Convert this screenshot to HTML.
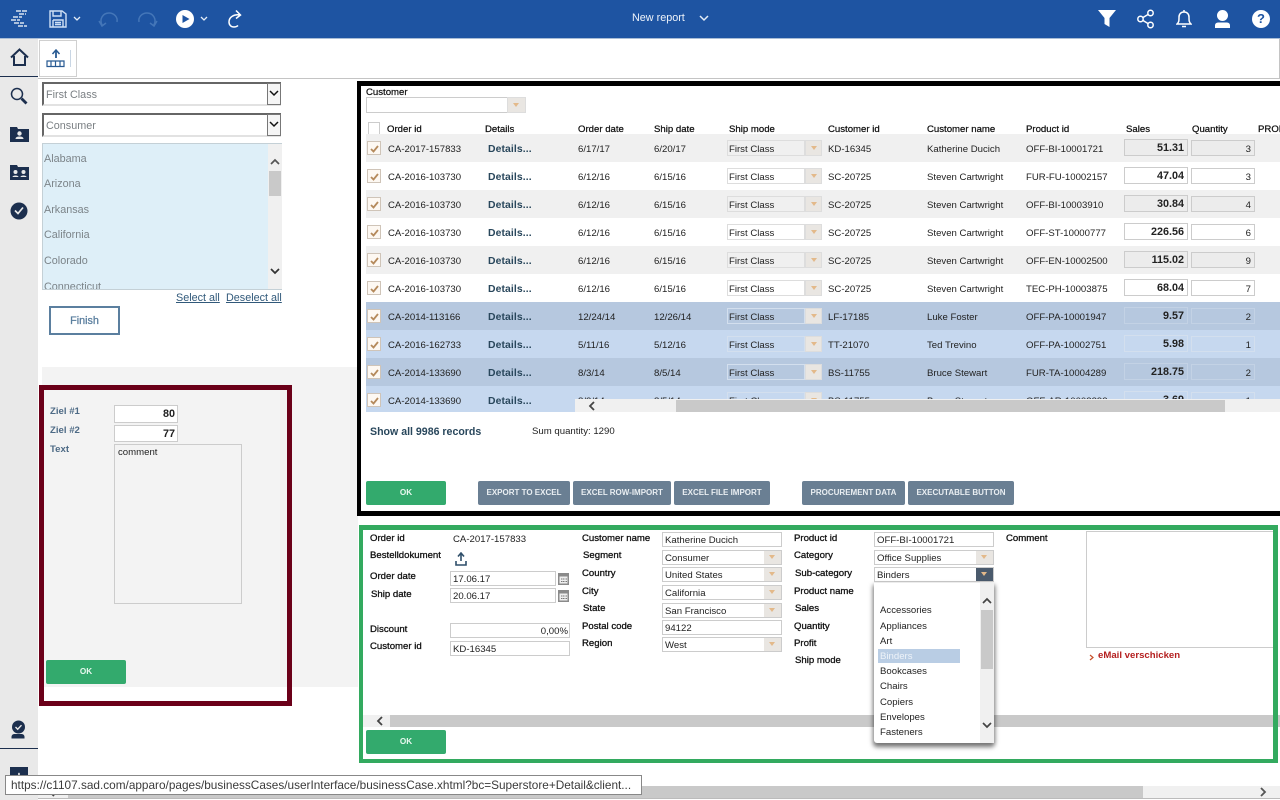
<!DOCTYPE html>
<html><head><meta charset="utf-8"><title>New report</title>
<style>
html,body{margin:0;padding:0;width:1280px;height:800px;overflow:hidden;background:#fff;font-family:"Liberation Sans",sans-serif;font-size:9.6px;color:#222}
div,span,a,svg{position:absolute;box-sizing:border-box;white-space:nowrap}
.h{font-weight:normal;color:#111;-webkit-text-stroke:.25px #111;top:125px;line-height:10px}
.r{left:366px;width:914px;height:28px;background:#fff}
.g{background:#f0f0f0}.d{background:#b6c8df}.l{background:#c6d8ef}
.r div,.r span{line-height:12px}
.t{top:9.5px}
.cb{left:1px;top:7px;width:14px;height:14px;background:#fdf8f2;border:1px solid #cfc4b8}
.cb svg{left:1px;top:1px}
.dt{left:122px;top:10px;font-weight:bold;font-size:10.4px;color:#29475c;letter-spacing:.1px}
.sm{left:361px;top:6px;width:78px;height:16px;background:#fff;border:1px solid #ddd;padding-left:1px;line-height:17px!important}
.g .sm{background:#f0f0f0}.d .sm{background:#b6c8df;border-color:#d3dfee}.l .sm{background:#c6d8ef;border-color:#d3dfee}
.ar{left:439px;top:6px;width:17px;height:16px;background:#e9e6e2;border:1px solid #ddd}
.ar:after,.a2:after{content:"";position:absolute;left:5px;top:5px;border-left:3px solid transparent;border-right:3px solid transparent;border-top:4px solid #e3b98a}
.s{left:758px;top:5px;width:64px;height:17px;background:#fff;border:1px solid #ccc;text-align:right;font-weight:bold;font-size:10.8px;padding-right:3px;line-height:17px!important}
.q{left:825px;top:6px;width:64px;height:16px;background:#fff;border:1px solid #ccc;text-align:right;padding-right:3px;line-height:17px!important}
.g .s,.g .q{background:#ececec}.d .s,.d .q{background:#b6c8df;border-color:#c3d2e5}.l .s,.l .q{background:#c6d8ef;border-color:#d3dfee}
.b{height:24px;background:#6a7f93;color:#e9eef2;font-weight:bold;font-size:8px;text-align:center;line-height:24px;border-radius:2px;top:481px}
.ok{width:80px;height:24px;background:#33aa6d;color:#e8f8ef;font-weight:bold;font-size:8.2px;text-align:center;line-height:24px;border-radius:2px}
.lb{font-weight:normal;color:#111;-webkit-text-stroke:.3px #111;line-height:11px}
.in{height:15px;background:#fff;border:1px solid #ccc;line-height:15px;padding-left:2px;font-size:9.6px}
.a2{width:17px;top:0;right:0;height:13px;background:#e9e6e2}
.a2:after{top:4px}
.li{left:880px;line-height:11px;font-size:9.6px;margin-top:1px}
.st{left:44px;color:#7c8489;font-size:10.8px;line-height:12px}
</style></head><body>

<!-- top bar -->
<div style="left:0;top:0;width:1280px;height:38px;background:#1e54a2"></div>
<div style="left:0;top:38px;width:1280px;height:1px;background:#a9bdd6"></div>
<svg style="left:9px;top:9px" width="22" height="20" fill="none" stroke="#fff" stroke-width="1.3"><path d="M7 2h12M10 5h7M4 8h9M2 11h9M5 14h10M9 17h9" stroke-dasharray="5 1"/></svg>
<svg style="left:48px;top:10px" width="20" height="18" fill="none" stroke="#cfe0f5" stroke-width="1.4"><path d="M2 1h12l4 3v13H2zM5 1v5h8V1M5 10h10v7M5 10v7M7 12.5h6M7 14.5h6"/></svg>
<svg style="left:72px;top:15px" width="10" height="8" fill="none" stroke="#e4edf8" stroke-width="1.3"><path d="M2 2l3 3 3-3"/></svg>
<svg style="left:98px;top:11px" width="22" height="17" fill="none" stroke="#4476b8" stroke-width="1.5"><path d="M4 14C1 8 5 2 11 2c5 0 9 4 8 9M1 10l3 5 4-3"/></svg>
<svg style="left:136px;top:11px" width="22" height="17" fill="none" stroke="#4476b8" stroke-width="1.5"><path d="M18 14c3-6-1-12-7-12C6 2 2 6 3 11M21 10l-3 5-4-3"/></svg>
<svg style="left:176px;top:10px" width="18" height="18"><circle cx="9" cy="9" r="9" fill="#fff"/><path d="M6.5 5l7 4-7 4z" fill="#1e54a2"/></svg>
<svg style="left:199px;top:15px" width="10" height="8" fill="none" stroke="#e4edf8" stroke-width="1.3"><path d="M2 2l3 3 3-3"/></svg>
<svg style="left:227px;top:9px" width="18" height="20" fill="none" stroke="#fff" stroke-width="1.5"><path d="M13 6c-6-1-11 2-11 7 0 3 2 5 5 5 2 0 3-.5 4-1.5M9 1.500l4.500 4.500-4.500 3.500"/></svg>
<div style="left:632px;top:12px;color:#eef3fa;font-size:10.8px;line-height:13px">New report</div>
<svg style="left:698px;top:14px" width="12" height="9" fill="none" stroke="#e4edf8" stroke-width="1.5"><path d="M2 2l4 4 4-4"/></svg>
<svg style="left:1097px;top:10px" width="20" height="18" fill="#fff"><path d="M1 0h18l-6.500 8v9l-5-3V8z"/></svg>
<svg style="left:1136px;top:9px" width="20" height="20" fill="none" stroke="#fff" stroke-width="1.5"><circle cx="4.500" cy="10" r="2.700"/><circle cx="14.500" cy="4" r="2.700"/><circle cx="14.500" cy="16" r="2.700"/><path d="M7 8.500l5-3M7 11.500l5 3"/></svg>
<svg style="left:1176px;top:9px" width="16" height="20" fill="none" stroke="#fff" stroke-width="1.5"><path d="M1 15c2-2 2-3 2-7 0-3 2-5 5-5s5 2 5 5c0 4 0 5 2 7zM6 17.500h4M8 1v2"/></svg>
<svg style="left:1214px;top:10px" width="17" height="18" fill="#fff"><circle cx="8.500" cy="5.500" r="5.500"/><path d="M1 18v-2.500c0-2 1.500-3 3.500-3h8c2 0 3.500 1 3.500 3V18z"/></svg>
<div style="left:1252px;top:10px;width:18px;height:18px;border-radius:50%;background:#fff;color:#1e54a2;font-weight:bold;font-size:13px;line-height:18px;text-align:center">?</div>

<!-- sidebar -->
<div style="left:0;top:39px;width:38px;height:761px;background:#e9e9e9"></div>
<div style="left:0;top:76px;width:38px;height:1px;background:#1c2f4e"></div>
<div style="left:0;top:748px;width:38px;height:1px;background:#1c2f4e"></div>
<svg style="left:10px;top:48px" width="19" height="19" fill="none" stroke="#1c2f4e" stroke-width="2"><path d="M1 9.500l8.500-8 8.500 8M4 8v9h11V8"/></svg>
<svg style="left:10px;top:87px" width="18" height="18" fill="none" stroke="#1c2f4e"><circle cx="7" cy="7" r="5.500" stroke-width="1.5"/><path d="M11.500 11.500l5 5" stroke-width="2.8"/></svg>
<svg style="left:10px;top:127px" width="19" height="15"><path d="M0 0h7l1 2h11v13H0z" fill="#1c2f4e"/><circle cx="9.500" cy="6.500" r="2.200" fill="#e9e9e9"/><path d="M5.500 12c0-2 2-2.500 4-2.500s4 .5 4 2.500z" fill="#e9e9e9"/></svg>
<svg style="left:10px;top:165px" width="19" height="15"><path d="M0 0h7l1 2h11v13H0z" fill="#1c2f4e"/><circle cx="5.500" cy="7" r="2" fill="#e9e9e9"/><circle cx="13.500" cy="7" r="2" fill="#e9e9e9"/><path d="M2.500 12c0-2 6-2 6 0zM10.500 12c0-2 6-2 6 0z" fill="#e9e9e9"/></svg>
<svg style="left:10px;top:202px" width="18" height="18"><circle cx="9" cy="9" r="8.500" fill="#1c2f4e"/><path d="M5 8.500l3 3 5-6" fill="none" stroke="#e9e9e9" stroke-width="1.7"/></svg>
<svg style="left:10px;top:720px" width="17" height="19"><circle cx="8.500" cy="7" r="6.500" fill="#1c2f4e"/><path d="M5.500 7l2.200 2.200 3.800-4" fill="none" stroke="#e9e9e9" stroke-width="1.4"/><path d="M1.500 18.500v-1.500c0-2 1.500-3 3-3h7c1.500 0 3 1 3 3v1.500z" fill="#1c2f4e"/></svg>
<div style="left:10px;top:767px;width:18px;height:20px;background:#1c2f4e;color:#e9e9e9;font-weight:bold;font-size:14px;line-height:18px;text-align:center">+</div>

<!-- toolbar -->
<div style="left:38px;top:78px;width:1242px;height:1px;background:#c4c4c4"></div>
<div style="left:1279px;top:39px;width:1px;height:40px;background:#c4c4c4"></div>
<div style="left:39px;top:40px;width:38px;height:37px;background:#fff;border:1px solid #d0d0d0"></div>
<svg style="left:46px;top:49px" width="21" height="20" fill="none" stroke="#285a92" stroke-width="1.2"><path d="M10 1v8" stroke-width="1.8"/><path d="M6.500 5L10 1l3.500 4" stroke-width="1.5"/><path d="M1 12h17v5.500H1zM5 12v5.500M9.500 12v5.500M14 12v5.500"/></svg>
<div style="left:70px;top:50px;width:1px;height:17px;background:#c9d6e4"></div>

<!-- left filter panel -->
<div style="left:42px;top:82px;width:239px;height:24px;background:#fff;border-top:2px solid #666;border-left:2px solid #666;border-bottom:2px solid #e2e2e2;color:#7a7f83;font-size:10.8px;line-height:22px;padding-left:2px">First Class</div>
<div style="left:267px;top:83px;width:14px;height:22px;background:#f5f5f5;border:1px solid #777"></div>
<svg style="left:269px;top:90px" width="10" height="8" fill="none" stroke="#111" stroke-width="1.5"><path d="M1 1l4 4 4-4"/></svg>
<div style="left:42px;top:113px;width:239px;height:24px;background:#fff;border-top:2px solid #666;border-left:2px solid #666;border-bottom:2px solid #e2e2e2;color:#7a7f83;font-size:10.8px;line-height:22px;padding-left:2px">Consumer</div>
<div style="left:267px;top:114px;width:14px;height:22px;background:#f5f5f5;border:1px solid #777"></div>
<svg style="left:269px;top:121px" width="10" height="8" fill="none" stroke="#111" stroke-width="1.5"><path d="M1 1l4 4 4-4"/></svg>

<div style="left:42px;top:143px;width:240px;height:147px;background:#deeff8;border:1px solid #c4d0d6;border-right:0;overflow:hidden">
<span class="st" style="left:1px;top:9px">Alabama</span>
<span class="st" style="left:1px;top:34px">Arizona</span>
<span class="st" style="left:1px;top:60px">Arkansas</span>
<span class="st" style="left:1px;top:85px">California</span>
<span class="st" style="left:1px;top:111px">Colorado</span>
<span class="st" style="left:1px;top:137px">Connecticut</span>
<div style="left:225px;top:-1px;width:15px;height:148px;background:#f0f0f0"></div>
<div style="left:226px;top:27px;width:12px;height:25px;background:#c9c9c9"></div>
</div>
<svg style="left:270px;top:158px" width="10" height="8" fill="none" stroke="#555" stroke-width="1.7"><path d="M1 6l4-4 4 4"/></svg>
<svg style="left:270px;top:268px" width="10" height="8" fill="none" stroke="#333" stroke-width="1.7"><path d="M1 1l4 4 4-4"/></svg>
<a style="left:176px;top:292px;color:#31597a;font-size:10.8px;text-decoration:underline;line-height:12px">Select all</a>
<a style="left:226px;top:292px;color:#31597a;font-size:10.8px;text-decoration:underline;line-height:12px">Deselect all</a>
<div style="left:49px;top:306px;width:71px;height:29px;border:2px solid #5b7f9f;color:#5b7f9f;font-weight:normal;-webkit-text-stroke:.3px #5b7f9f;font-size:10.8px;text-align:center;line-height:27px">Finish</div>

<!-- gray panel + maroon box -->
<div style="left:42px;top:367px;width:316px;height:320px;background:#f3f3f3"></div>
<div style="left:39px;top:385px;width:253px;height:321px;border:5px solid #6b0019"></div>
<div style="left:44px;top:687px;width:243px;height:14px;background:#fff"></div>
<div style="left:50px;top:406px;color:#4d6a85;font-weight:bold;font-size:9.6px;line-height:12px">Ziel #1</div>
<div style="left:50px;top:425px;color:#4d6a85;font-weight:bold;font-size:9.6px;line-height:12px">Ziel #2</div>
<div style="left:50px;top:444px;color:#4d6a85;font-weight:bold;font-size:9.6px;line-height:12px">Text</div>
<div style="left:114px;top:405px;width:64px;height:18px;background:#fff;border:1px solid #ccc;text-align:right;font-weight:bold;font-size:10.8px;line-height:17px;padding-right:2px">80</div>
<div style="left:114px;top:425px;width:64px;height:17px;background:#fff;border:1px solid #ccc;text-align:right;font-weight:bold;font-size:10.8px;line-height:16px;padding-right:2px">77</div>
<div style="left:114px;top:444px;width:128px;height:160px;background:#f3f3f3;border:1px solid #ccc;padding:2px 3px;line-height:11px">comment</div>
<div class="ok" style="left:46px;top:660px">OK</div>

<!-- black box -->
<div style="left:366px;top:87px;color:#111;-webkit-text-stroke:.25px #111;line-height:11px">Customer</div>
<div style="left:366px;top:97px;width:160px;height:16px;background:#fff;border:1px solid #ccc"></div>
<div class="ar" style="left:507px;top:97px;width:19px"></div>
<span class="h" style="left:387px">Order id</span><span class="h" style="left:485px">Details</span><span class="h" style="left:578px">Order date</span><span class="h" style="left:654px">Ship date</span><span class="h" style="left:729px">Ship mode</span><span class="h" style="left:828px">Customer id</span><span class="h" style="left:927px">Customer name</span><span class="h" style="left:1026px">Product id</span><span class="h" style="left:1126px">Sales</span><span class="h" style="left:1192px">Quantity</span><span class="h" style="left:1258px">PROFIT</span>
<div style="left:368px;top:122px;width:12px;height:13px;background:#fff;border:1px solid #ccc"></div>

<div style="left:0;top:0;width:1280px;height:412px;overflow:hidden">
<div class="r g" style="top:134px"><div class="cb"><svg width="11" height="11" fill="none" stroke="#b58a5c" stroke-width="1.8"><path d="M2 6l2.500 2.500L9 3"/></svg></div><span class="t" style="left:22px">CA-2017-157833</span><span class="dt">Details...</span><span class="t" style="left:212px">6/17/17</span><span class="t" style="left:288px">6/20/17</span><span class="sm">First Class</span><div class="ar"></div><span class="t" style="left:462px">KD-16345</span><span class="t" style="left:561px">Katherine Ducich</span><span class="t" style="left:660px">OFF-BI-10001721</span><span class="s">51.31</span><span class="q">3</span></div>
<div class="r" style="top:162px"><div class="cb"><svg width="11" height="11" fill="none" stroke="#b58a5c" stroke-width="1.8"><path d="M2 6l2.500 2.500L9 3"/></svg></div><span class="t" style="left:22px">CA-2016-103730</span><span class="dt">Details...</span><span class="t" style="left:212px">6/12/16</span><span class="t" style="left:288px">6/15/16</span><span class="sm">First Class</span><div class="ar"></div><span class="t" style="left:462px">SC-20725</span><span class="t" style="left:561px">Steven Cartwright</span><span class="t" style="left:660px">FUR-FU-10002157</span><span class="s">47.04</span><span class="q">3</span></div>
<div class="r g" style="top:190px"><div class="cb"><svg width="11" height="11" fill="none" stroke="#b58a5c" stroke-width="1.8"><path d="M2 6l2.500 2.500L9 3"/></svg></div><span class="t" style="left:22px">CA-2016-103730</span><span class="dt">Details...</span><span class="t" style="left:212px">6/12/16</span><span class="t" style="left:288px">6/15/16</span><span class="sm">First Class</span><div class="ar"></div><span class="t" style="left:462px">SC-20725</span><span class="t" style="left:561px">Steven Cartwright</span><span class="t" style="left:660px">OFF-BI-10003910</span><span class="s">30.84</span><span class="q">4</span></div>
<div class="r" style="top:218px"><div class="cb"><svg width="11" height="11" fill="none" stroke="#b58a5c" stroke-width="1.8"><path d="M2 6l2.500 2.500L9 3"/></svg></div><span class="t" style="left:22px">CA-2016-103730</span><span class="dt">Details...</span><span class="t" style="left:212px">6/12/16</span><span class="t" style="left:288px">6/15/16</span><span class="sm">First Class</span><div class="ar"></div><span class="t" style="left:462px">SC-20725</span><span class="t" style="left:561px">Steven Cartwright</span><span class="t" style="left:660px">OFF-ST-10000777</span><span class="s">226.56</span><span class="q">6</span></div>
<div class="r g" style="top:246px"><div class="cb"><svg width="11" height="11" fill="none" stroke="#b58a5c" stroke-width="1.8"><path d="M2 6l2.500 2.500L9 3"/></svg></div><span class="t" style="left:22px">CA-2016-103730</span><span class="dt">Details...</span><span class="t" style="left:212px">6/12/16</span><span class="t" style="left:288px">6/15/16</span><span class="sm">First Class</span><div class="ar"></div><span class="t" style="left:462px">SC-20725</span><span class="t" style="left:561px">Steven Cartwright</span><span class="t" style="left:660px">OFF-EN-10002500</span><span class="s">115.02</span><span class="q">9</span></div>
<div class="r" style="top:274px"><div class="cb"><svg width="11" height="11" fill="none" stroke="#b58a5c" stroke-width="1.8"><path d="M2 6l2.500 2.500L9 3"/></svg></div><span class="t" style="left:22px">CA-2016-103730</span><span class="dt">Details...</span><span class="t" style="left:212px">6/12/16</span><span class="t" style="left:288px">6/15/16</span><span class="sm">First Class</span><div class="ar"></div><span class="t" style="left:462px">SC-20725</span><span class="t" style="left:561px">Steven Cartwright</span><span class="t" style="left:660px">TEC-PH-10003875</span><span class="s">68.04</span><span class="q">7</span></div>
<div class="r d" style="top:302px"><div class="cb"><svg width="11" height="11" fill="none" stroke="#b58a5c" stroke-width="1.8"><path d="M2 6l2.500 2.500L9 3"/></svg></div><span class="t" style="left:22px">CA-2014-113166</span><span class="dt">Details...</span><span class="t" style="left:212px">12/24/14</span><span class="t" style="left:288px">12/26/14</span><span class="sm">First Class</span><div class="ar"></div><span class="t" style="left:462px">LF-17185</span><span class="t" style="left:561px">Luke Foster</span><span class="t" style="left:660px">OFF-PA-10001947</span><span class="s">9.57</span><span class="q">2</span></div>
<div class="r l" style="top:330px"><div class="cb"><svg width="11" height="11" fill="none" stroke="#b58a5c" stroke-width="1.8"><path d="M2 6l2.500 2.500L9 3"/></svg></div><span class="t" style="left:22px">CA-2016-162733</span><span class="dt">Details...</span><span class="t" style="left:212px">5/11/16</span><span class="t" style="left:288px">5/12/16</span><span class="sm">First Class</span><div class="ar"></div><span class="t" style="left:462px">TT-21070</span><span class="t" style="left:561px">Ted Trevino</span><span class="t" style="left:660px">OFF-PA-10002751</span><span class="s">5.98</span><span class="q">1</span></div>
<div class="r d" style="top:358px"><div class="cb"><svg width="11" height="11" fill="none" stroke="#b58a5c" stroke-width="1.8"><path d="M2 6l2.500 2.500L9 3"/></svg></div><span class="t" style="left:22px">CA-2014-133690</span><span class="dt">Details...</span><span class="t" style="left:212px">8/3/14</span><span class="t" style="left:288px">8/5/14</span><span class="sm">First Class</span><div class="ar"></div><span class="t" style="left:462px">BS-11755</span><span class="t" style="left:561px">Bruce Stewart</span><span class="t" style="left:660px">FUR-TA-10004289</span><span class="s">218.75</span><span class="q">2</span></div>
<div class="r l" style="top:386px"><div class="cb"><svg width="11" height="11" fill="none" stroke="#b58a5c" stroke-width="1.8"><path d="M2 6l2.500 2.500L9 3"/></svg></div><span class="t" style="left:22px">CA-2014-133690</span><span class="dt">Details...</span><span class="t" style="left:212px">8/3/14</span><span class="t" style="left:288px">8/5/14</span><span class="sm">First Class</span><div class="ar"></div><span class="t" style="left:462px">BS-11755</span><span class="t" style="left:561px">Bruce Stewart</span><span class="t" style="left:660px">OFF-AR-10003393</span><span class="s">3.69</span><span class="q">1</span></div>
<div style="left:575px;top:399px;width:705px;height:13px;background:#f0f0f0"></div>
<div style="left:676px;top:400px;width:549px;height:12px;background:#c9c9c9"></div>
<svg style="left:587px;top:401px" width="10" height="10" fill="none" stroke="#444" stroke-width="1.8"><path d="M7 1L3 5l4 4"/></svg>
</div>
<div style="left:370px;top:426px;font-weight:bold;font-size:10.6px;color:#29475c;line-height:13px">Show all 9986 records</div>
<div style="left:532px;top:426px;line-height:12px">Sum quantity: 1290</div>
<div class="ok" style="left:366px;top:481px">OK</div>
<div class="b" style="left:478px;width:92px">EXPORT TO EXCEL</div>
<div class="b" style="left:573px;width:98px">EXCEL ROW-IMPORT</div>
<div class="b" style="left:674px;width:96px">EXCEL FILE IMPORT</div>
<div class="b" style="left:802px;width:103px">PROCUREMENT DATA</div>
<div class="b" style="left:908px;width:106px">EXECUTABLE BUTTON</div>
<div style="left:357px;top:81px;width:931px;height:435px;border:5px solid #000;border-left-width:4px"></div>

<!-- green box -->
<span class="lb" style="left:370px;top:533px">Order id</span><span style="left:453px;top:534px;line-height:12px">CA-2017-157833</span>
<span class="lb" style="left:370px;top:550px">Bestelldokument</span>
<svg style="left:454px;top:552px" width="14" height="15" fill="none" stroke="#2f4f6a" stroke-width="1.6"><path d="M7 1v8M4 4.500L7 1l3 3.500M2 9v4h10V9"/></svg>
<span class="lb" style="left:370px;top:571px">Order date</span>
<div class="in" style="left:450px;top:571px;width:106px">17.06.17</div>
<svg style="left:557px;top:571px" width="13" height="14"><path d="M1 2h11v12H1z" fill="#8a8a8a"/><path d="M2.500 5.500h8v7h-8z" fill="#eee"/><path d="M4 8h1.500M6 8h1.500M8.500 8h1.500M4 10.500h1.500M6 10.500h1.500M8.500 10.500h1.500" stroke="#777"/></svg>
<span class="lb" style="left:371px;top:589px">Ship date</span>
<div class="in" style="left:450px;top:588px;width:106px">20.06.17</div>
<svg style="left:557px;top:588px" width="13" height="14"><path d="M1 2h11v12H1z" fill="#8a8a8a"/><path d="M2.500 5.500h8v7h-8z" fill="#eee"/><path d="M4 8h1.500M6 8h1.500M8.500 8h1.500M4 10.500h1.500M6 10.500h1.500M8.500 10.500h1.500" stroke="#777"/></svg>
<span class="lb" style="left:370px;top:624px">Discount</span>
<div class="in" style="left:450px;top:623px;width:120px;text-align:right;padding-right:1px">0,00%</div>
<span class="lb" style="left:370px;top:641px">Customer id</span>
<div class="in" style="left:450px;top:641px;width:120px">KD-16345</div>

<span class="lb" style="left:582px;top:533px">Customer name</span><div class="in" style="left:662px;top:532px;width:120px">Katherine Ducich</div>
<span class="lb" style="left:583px;top:550px">Segment</span><div class="in" style="left:662px;top:550px;width:120px">Consumer<div class="a2"></div></div>
<span class="lb" style="left:582px;top:568px">Country</span><div class="in" style="left:662px;top:567px;width:120px">United States<div class="a2"></div></div>
<span class="lb" style="left:582px;top:586px">City</span><div class="in" style="left:662px;top:585px;width:120px">California<div class="a2"></div></div>
<span class="lb" style="left:583px;top:603px">State</span><div class="in" style="left:662px;top:603px;width:120px">San Francisco<div class="a2"></div></div>
<span class="lb" style="left:582px;top:621px">Postal code</span><div class="in" style="left:662px;top:620px;width:120px">94122</div>
<span class="lb" style="left:582px;top:638px">Region</span><div class="in" style="left:662px;top:637px;width:120px">West<div class="a2"></div></div>

<span class="lb" style="left:794px;top:533px">Product id</span><div class="in" style="left:874px;top:532px;width:120px">OFF-BI-10001721</div>
<span class="lb" style="left:794px;top:550px">Category</span><div class="in" style="left:874px;top:550px;width:120px">Office Supplies<div class="a2"></div></div>
<span class="lb" style="left:795px;top:568px">Sub-category</span><div class="in" style="left:874px;top:567px;width:120px">Binders<div class="a2" style="background:#4a5a6c"></div></div>
<span class="lb" style="left:794px;top:586px">Product name</span>
<span class="lb" style="left:795px;top:603px">Sales</span>
<span class="lb" style="left:794px;top:621px">Quantity</span>
<span class="lb" style="left:794px;top:638px">Profit</span>
<span class="lb" style="left:795px;top:655px">Ship mode</span>
<span class="lb" style="left:1006px;top:533px">Comment</span>
<div style="left:1086px;top:531px;width:188px;height:117px;border:1px solid #ccc;background:#fff"></div>
<svg style="left:1089px;top:654px" width="6" height="7" fill="none" stroke="#c8502a" stroke-width="1.2"><path d="M1 1l3 2.500L1 6"/></svg>
<div style="left:1098px;top:650px;color:#b41e1e;font-weight:bold;font-size:9.6px;line-height:12px">eMail verschicken</div>

<div style="left:363px;top:715px;width:917px;height:12px;background:#c9c9c9"></div>
<div style="left:363px;top:715px;width:27px;height:12px;background:#f0f0f0"></div>
<svg style="left:375px;top:716px" width="10" height="10" fill="none" stroke="#444" stroke-width="1.8"><path d="M7 1L3 5l4 4"/></svg>
<div class="ok" style="left:366px;top:730px">OK</div>
<div style="left:359px;top:525px;width:919px;height:238px;border:4px solid #33aa5f;border-top-width:5px;border-right-width:5px"></div>

<!-- dropdown -->
<div style="left:874px;top:583px;width:120px;height:160px;background:#fff;border-radius:0 0 3px 3px;box-shadow:0 3px 5px 1px rgba(0,0,0,.55)"></div>
<div style="left:980px;top:583px;width:14px;height:160px;background:#f0f0f0"></div>
<div style="left:981px;top:610px;width:12px;height:59px;background:#c9c9c9"></div>
<svg style="left:982px;top:597px" width="10" height="8" fill="none" stroke="#444" stroke-width="1.7"><path d="M1 6l4-4 4 4"/></svg>
<svg style="left:982px;top:722px" width="10" height="8" fill="none" stroke="#444" stroke-width="1.7"><path d="M1 1l4 4 4-4"/></svg>
<div style="left:878px;top:649px;width:82px;height:14px;background:#b9cde4"></div>
<span class="li" style="top:604px">Accessories</span>
<span class="li" style="top:620px">Appliances</span>
<span class="li" style="top:635px">Art</span>
<span class="li" style="top:650px;color:#eef3f9">Binders</span>
<span class="li" style="top:665px">Bookcases</span>
<span class="li" style="top:680px">Chairs</span>
<span class="li" style="top:696px">Copiers</span>
<span class="li" style="top:711px">Envelopes</span>
<span class="li" style="top:726px">Fasteners</span>

<!-- bottom scrollbar + tooltip -->
<div style="left:38px;top:786px;width:1242px;height:12px;background:#f0f0f0"></div>
<div style="left:38px;top:798px;width:1242px;height:1px;background:#bbb"></div>
<div style="left:68px;top:786px;width:1075px;height:12px;background:#c9c9c9"></div>
<svg style="left:47px;top:787px" width="10" height="10" fill="none" stroke="#444" stroke-width="1.8"><path d="M7 1L3 5l4 4"/></svg>
<svg style="left:1258px;top:787px" width="10" height="10" fill="none" stroke="#555" stroke-width="1.8"><path d="M3 1l4 4-4 4"/></svg>
<div style="left:5px;top:775px;width:637px;height:20px;background:#fff;border:1px solid #888;color:#3a3a3a;font-size:11.8px;line-height:18px;padding-left:5px;overflow:hidden">https://c1107.sad.com/apparo/pages/businessCases/userInterface/businessCase.xhtml?bc=Superstore+Detail&amp;client...</div>
</body></html>
